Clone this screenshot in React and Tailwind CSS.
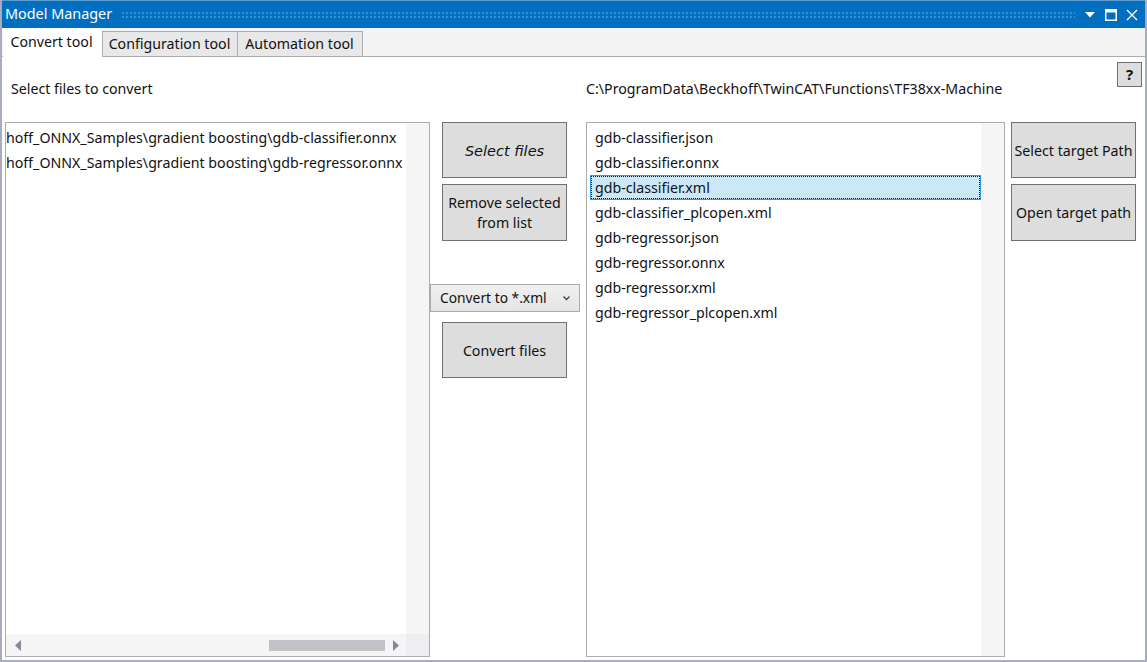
import React from 'react';

const leftFiles = [
    "hoff_ONNX_Samples\\gradient boosting\\gdb-classifier.onnx",
    "hoff_ONNX_Samples\\gradient boosting\\gdb-regressor.onnx"
];

const rightFiles = [
    "gdb-classifier.json",
    "gdb-classifier.onnx",
    "gdb-classifier.xml",
    "gdb-classifier_plcopen.xml",
    "gdb-regressor.json",
    "gdb-regressor.onnx",
    "gdb-regressor.xml",
    "gdb-regressor_plcopen.xml"
];

const ActionButton = ({ className = '', children }) => (
    <button className={`w-[125px] flex items-center justify-center bg-[#dddddd] border border-[#707070] text-center leading-[20px] pt-px text-[#111] ${className}`}>
        {children}
    </button>
);

const App = () => {
    return (
        <div className="w-[1147px] h-[662px] flex flex-col bg-white border-x-2 border-b-2 border-x-[#a9acc0] border-b-[#a9acc0] overflow-hidden text-[14.2px] text-[#111] font-['Noto_Sans','Open_Sans',sans-serif]">
            {/* Title bar */}
            <div className="h-[28px] shrink-0 -mx-[2px] bg-[#006fc0] border-t border-[#5b9bd0] flex items-center pl-[5px] pr-[9px] text-white">
                <span className="text-[14.4px] leading-none">Model Manager</span>
                <div className="flex-1 h-[7px] mx-[9px] bg-[radial-gradient(#3f8fd0_1px,transparent_1px)] bg-[length:4px_4px]"></div>
                <svg width="12" height="6" viewBox="0 0 12 6" className="mr-[9px]"><path d="M1 0h10L6 5.5z" fill="#fff" /></svg>
                <svg width="12" height="12" viewBox="0 0 12 12" className="mr-[9px]">
                    <rect x="0.75" y="0.75" width="10.5" height="10.5" fill="#006fc0" stroke="#fff" strokeWidth="1.5" />
                    <rect x="1" y="1" width="10" height="2.5" fill="#fff" />
                </svg>
                <svg width="12" height="12" viewBox="0 0 12 12"><path d="M1 1l10 10M11 1L1 11" stroke="#fff" strokeWidth="1.4" fill="none" /></svg>
            </div>

            {/* Tabs */}
            <div className="h-[29px] shrink-0 bg-[#f3f3f3] border-b border-[#acacac] flex items-end pl-[1px]">
                <div className="h-[29px] -mb-px w-[99px] bg-white flex items-center justify-center pb-[1px] pr-[2px] relative z-10">Convert tool</div>
                <div className="h-[26px] -mb-px w-[136px] bg-[#e8e8e8] border border-[#acacac] flex items-center justify-center pr-[1px]">Configuration tool</div>
                <div className="h-[26px] -mb-px w-[125px] bg-[#e8e8e8] border border-[#acacac] border-l-0 flex items-center justify-center pr-[1px]">Automation tool</div>
            </div>

            {/* Labels row */}
            <div className="h-[65px] shrink-0 flex pl-[9px]">
                <div className="w-[575px] pt-[22px] leading-[20px]">Select files to convert</div>
                <div className="flex-1 pt-[22px] leading-[20px] whitespace-nowrap">C:\ProgramData\Beckhoff\TwinCAT\Functions\TF38xx-Machine</div>
                <div className="pt-[5px] pr-[3px]">
                    <button className="w-[25px] h-[25px] bg-[#dddddd] border border-[#707070] font-bold text-[15px] leading-none">?</button>
                </div>
            </div>

            {/* Main row */}
            <div className="flex-1 min-h-0 flex pl-[3px] pb-[3px]">
                <div className="w-[425px] shrink-0 flex flex-col border border-[#acacac] bg-white">
                    <div className="flex-1 min-h-0 flex">
                        <div className="flex-1 overflow-hidden pt-[2px]">
                            {leftFiles.map((f) => (
                                <div key={f} className="h-[25px] leading-[25px] whitespace-nowrap">{f}</div>
                            ))}
                        </div>
                        <div className="w-[23px] bg-[#f5f5f5]"></div>
                    </div>
                    <div className="h-[22px] shrink-0 flex items-center bg-[#f5f5f5]">
                        <svg width="7" height="11" viewBox="0 0 7 11" className="ml-[9px]"><path d="M6 0v11L0 5.5z" fill="#868999" /></svg>
                        <div className="w-[116px] h-[11px] ml-[247px] bg-[#c2c3c9]"></div>
                        <svg width="7" height="11" viewBox="0 0 7 11" className="ml-[8px]"><path d="M0 0v11l6-5.5z" fill="#868999" /></svg>
                        <div className="ml-auto w-[23px] h-full bg-[#eeeef2]"></div>
                    </div>
                </div>

                <div className="w-[156px] shrink-0 flex flex-col items-start">
                    <ActionButton className="h-[56px] mb-[6px] ml-[12px]"><span className="font-['DejaVu_Sans',sans-serif] italic text-[14.5px]">Select files</span></ActionButton>
                    <ActionButton className="h-[57px] mb-[43px] ml-[12px]">Remove selected<br />from list</ActionButton>
                    <div className="w-[150px] h-[28px] mb-[10px] border border-[#acacac] bg-gradient-to-b from-[#f0f0f0] to-[#e5e5e5] flex items-center pl-[9px] pr-[9px]">
                        <span className="text-[13.8px]">Convert to *.xml</span>
                        <svg width="7" height="5" viewBox="0 0 7 5" className="ml-auto"><path d="M0.5 0.5L3.5 3.5L6.5 0.5" stroke="#404040" strokeWidth="1.3" fill="none" /></svg>
                    </div>
                    <ActionButton className="h-[56px] ml-[12px]">Convert files</ActionButton>
                </div>

                <div className="w-[419px] shrink-0 flex border border-[#acacac] bg-white">
                    <div className="flex-1 pt-[2px] pl-[3px]">
                        {rightFiles.map((f, i) => (
                            <div key={f} className={`h-[25px] leading-[23px] pl-[4px] border whitespace-nowrap ${i === 2 ? 'bg-[#cce8f7] border-[#26a0da] outline-1 outline-dotted outline-[#111] -outline-offset-2' : 'border-transparent'}`}>{f}</div>
                        ))}
                    </div>
                    <div className="w-[23px] bg-[#f5f5f5]"></div>
                </div>

                <div className="ml-[6px] flex flex-col">
                    <ActionButton className="h-[56px] mb-[6px]">Select target Path</ActionButton>
                    <ActionButton className="h-[57px]">Open target path</ActionButton>
                </div>
            </div>
        </div>
    );
};

export default App;
